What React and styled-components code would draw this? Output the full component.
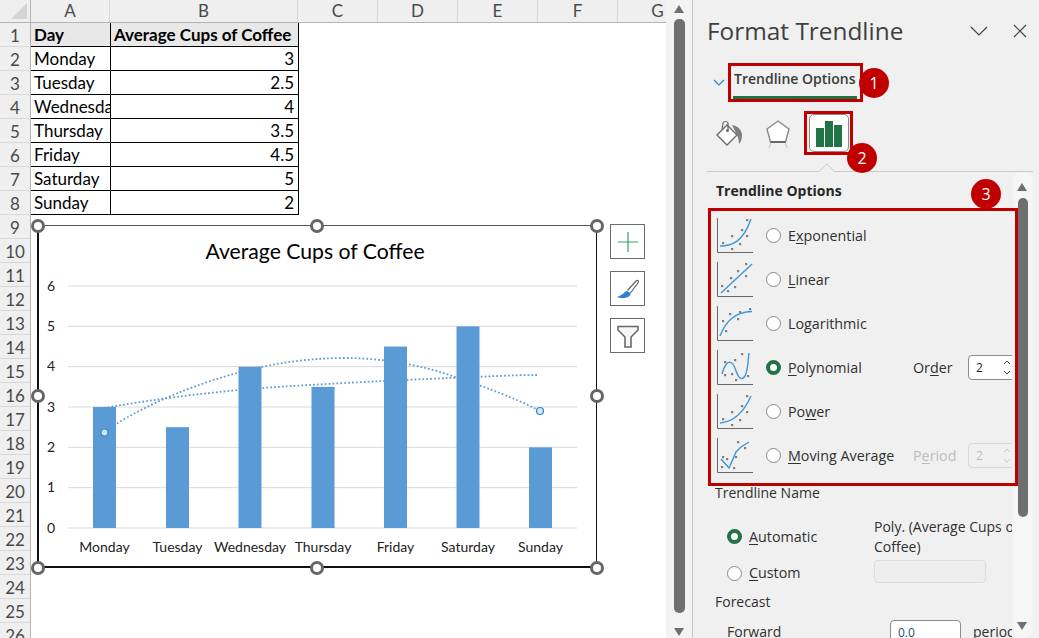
import React from 'react';
import styled, { createGlobalStyle } from 'styled-components';

const GlobalStyle = createGlobalStyle`
  html, body { margin: 0; padding: 0; background: #fff; overflow: hidden; }
  * { box-sizing: border-box; }
`;

const Page = styled.div`
  display: flex;
  width: 1039px;
  height: 638px;
  overflow: hidden;
  font-family: 'Lato', sans-serif;
`;

/* ---------- sheet ---------- */

const Sheet = styled.div`
  position: relative;
  width: 666px;
  height: 638px;
  overflow: hidden;
  background: #fff;
  flex-shrink: 0;
`;

const ColHeaders = styled.div`
  display: flex;
  height: 23px;
  background: #efefef;
  border-bottom: 1px solid #b4b4b4;
`;

const Corner = styled.div`
  position: relative;
  width: 31px;
  flex-shrink: 0;
  border-right: 1px solid #b4b4b4;

  &::after {
    content: '';
    position: absolute;
    right: 3px;
    bottom: 3px;
    border-style: solid;
    border-width: 0 0 16px 16px;
    border-color: transparent transparent #d4d4d4 transparent;
  }
`;

const ColHead = styled.div`
  width: ${(p) => p.$w}px;
  flex-shrink: 0;
  text-align: center;
  font-size: 17px;
  line-height: 22px;
  color: #4a4a4a;
  border-right: 1px solid #d8d8d8;
`;

const SheetBody = styled.div`
  display: flex;
`;

const RowHeaders = styled.div`
  width: 31px;
  flex-shrink: 0;
  background: #efefef;
  border-right: 1px solid #b4b4b4;
`;

const RowHead = styled.div`
  height: 24px;
  line-height: 25px;
  text-align: center;
  font-size: 17px;
  color: #4a4a4a;
  border-bottom: 1px solid #d8d8d8;
`;

const DataTable = styled.div`
  display: grid;
  grid-template-columns: 80px 188px;
  grid-auto-rows: 24px;
  align-self: flex-start;
`;

const Cell = styled.div`
  padding: 0 4px 0 3px;
  font-size: 17px;
  font-weight: ${(p) => (p.$head ? 700 : 400)};
  line-height: 24px;
  color: #000;
  white-space: nowrap;
  overflow: hidden;
  text-align: ${(p) => (p.$num ? 'right' : 'left')};
  background: ${(p) => (p.$head ? '#e8e8e8' : '#fff')};
  border-right: 1px solid #000;
  border-bottom: 1px solid #000;
`;

const SheetScroll = styled.div`
  position: relative;
  width: 27px;
  flex-shrink: 0;
  background: #f3f3f3;
  border-right: 1px solid #c8c8c8;
  padding: 19px 6px 25px 8px;
`;

const SheetThumb = styled.div`
  height: 594px;
  width: 11px;
  border-radius: 5px;
  background: #6f6f6f;
`;

const Arrow = styled.div`
  position: absolute;
  left: ${(p) => p.$x}px;
  ${(p) => (p.$down ? 'bottom' : 'top')}: ${(p) => p.$off}px;
  border-left: 5.5px solid transparent;
  border-right: 5.5px solid transparent;
  ${(p) => (p.$down ? 'border-top' : 'border-bottom')}: 8px solid #6f6f6f;
`;

/* ---------- chart ---------- */

const ChartFrame = styled.div`
  position: absolute;
  left: 37px;
  top: 225px;
  width: 560px;
  height: 343px;
  background: #fff;
  border: 2px solid #111;
  border-top: 1px solid #555;
  border-right-width: 1.5px;
`;

const ChartSvg = styled.svg`
  position: absolute;
  left: -2px;
  top: -1px;
  width: 560px;
  height: 343px;
`;

const Handle = styled.div`
  position: absolute;
  left: ${(p) => p.$x}px;
  top: ${(p) => p.$y}px;
  width: 14px;
  height: 14px;
  margin: -7px 0 0 -7px;
  border-radius: 50%;
  background: #fff;
  border: 3px solid #666;
`;

const ChartTools = styled.div`
  position: absolute;
  left: 610px;
  top: 224px;
  display: flex;
  flex-direction: column;
  gap: 12px;
`;

const ToolButton = styled.div`
  display: flex;
  align-items: center;
  justify-content: center;
  width: 35px;
  height: 35px;
  background: #fff;
  border: 1px solid #6b6b6b;
`;

/* ---------- format panel ---------- */

const Panel = styled.div`
  position: relative;
  width: 346px;
  height: 638px;
  overflow: hidden;
  flex-shrink: 0;
  background: #f0f0f0;
  font-family: 'Open Sans', sans-serif;
  color: #262626;
  font-size: 14px;
`;

const PanelHeader = styled.div`
  display: flex;
  align-items: center;
  height: 63px;
  padding: 0 12px 2px 14px;
`;

const PanelTitle = styled.div`
  flex: 1;
  font-size: 24.4px;
  line-height: 32px;
  color: #3f3f3f;
`;

const HeaderIcons = styled.div`
  display: flex;
  align-items: center;
  gap: 25px;
`;

const TabRow = styled.div`
  display: flex;
  align-items: center;
  height: 39px;
  padding-left: 20px;
  gap: 3px;
`;

const RedBox = styled.div`
  border: 3px solid #c00000;
`;

const TabBox = styled(RedBox)`
  position: relative;
  width: 135px;
  height: 39px;
  padding: 3px 3px 0 3px;
  font-size: 14px;
  font-weight: 600;
  line-height: 20px;
  color: #3a3a3a;
  white-space: nowrap;

  &::after {
    content: '';
    position: absolute;
    left: 2px;
    right: 3px;
    bottom: 0;
    height: 3px;
    background: #217346;
  }
`;

const IconTabs = styled.div`
  display: flex;
  align-items: flex-start;
  height: 44px;
  margin-top: 9px;
  padding-left: 22px;
`;

const IconTab = styled.div`
  width: ${(p) => p.$w}px;
  padding-top: ${(p) => p.$top}px;
  flex-shrink: 0;
`;

const ActiveTabBox = styled(RedBox)`
  width: 49px;
  height: 44px;
  padding: 0 1px 0 2px;
`;

const ActiveTab = styled.div`
  display: flex;
  align-items: flex-end;
  justify-content: center;
  gap: 1px;
  height: 38px;
  padding-bottom: 4px;
  background: #fff;
  border: 1px solid #8a8a8a;
  border-radius: 5px;
`;

const GreenBar = styled.div`
  width: 8px;
  height: ${(p) => p.$h}px;
  background: #217346;
`;

const Divider = styled.div`
  position: relative;
  height: 1px;
  width: 326px;
  margin: 16px 0 0 14px;
  background: #c9c9c9;

  &::after {
    content: '';
    position: absolute;
    left: 113px;
    top: -6px;
    width: 13px;
    height: 13px;
    background: #f0f0f0;
    border-top: 1px solid #c9c9c9;
    border-left: 1px solid #c9c9c9;
    transform: rotate(45deg) scale(0.9);
    clip-path: polygon(0 0, 100% 0, 0 100%);
  }
`;

const PanelBody = styled.div`
  display: flex;
  height: 466px;
`;

const Content = styled.div`
  width: 320px;
  flex-shrink: 0;
  padding-left: 15px;
`;

const SectionTitle = styled.div`
  height: 36px;
  padding: 9px 0 0 8px;
  font-weight: 700;
  font-size: 14px;
  line-height: 20px;
  color: #262626;
`;

const OptionsBox = styled(RedBox)`
  position: relative;
  z-index: 1;
  width: 310px;
  height: 278px;
`;

const OptionRows = styled.div`
  width: 301px;
  height: 272px;
  padding: 7px 0 0 6px;
  overflow: hidden;
`;

const OptionRow = styled.div`
  display: grid;
  grid-template-columns: 49px 22px 125px 55px 50px;
  align-items: center;
  height: 44px;
  padding-bottom: 9px;
`;

const TrendIcon = styled.svg`
  width: 36px;
  height: 35px;
  display: block;
`;

const Radio = styled.span`
  display: block;
  width: 15px;
  height: 15px;
  border-radius: 50%;
  background: #fff;
  border: ${(p) => (p.$on ? '4px solid #217346' : '1px solid #8a8a8a')};
`;

const OptionLabel = styled.span`
  font-size: 14.3px;
  line-height: 20px;
  white-space: nowrap;
  color: ${(p) => (p.$off ? '#bdbdbd' : '#303030')};

  u {
    text-underline-offset: 2px;
    text-decoration-thickness: 1px;
  }
`;

const Spinner = styled.div`
  display: flex;
  align-items: center;
  justify-content: space-between;
  width: 50px;
  height: 25px;
  padding: 0 6px 0 7px;
  background: ${(p) => (p.$off ? 'transparent' : '#fff')};
  border: 1px solid ${(p) => (p.$off ? '#d6d6d6' : '#8d8d8d')};
  border-radius: 4px;
  font-size: 12px;
  color: ${(p) => (p.$off ? '#bdbdbd' : '#262626')};
`;

const SpinArrows = styled.svg`
  width: 8px;
  height: 19px;
  display: block;
`;

const PlainLabel = styled.div`
  font-size: 14px;
  line-height: 20px;
  padding-left: ${(p) => p.$pad || 0}px;
  margin-top: ${(p) => p.$top || 0}px;
  color: #303030;
`;

const NameGrid = styled.div`
  display: grid;
  grid-template-columns: 166px 138px;
  grid-template-rows: 40px 29px;
  align-items: center;
  width: 304px;
  margin: 14px 0 0 0;
  overflow: hidden;
`;

const RadioOption = styled.div`
  display: flex;
  align-items: center;
  gap: 7px;
  padding-left: 19px;
  margin-top: ${(p) => p.$shift}px;
`;

const PolyName = styled.div`
  width: 170px;
  font-size: 14px;
  line-height: 20px;
  color: #303030;
`;

const NameInput = styled.div`
  width: 112px;
  height: 23px;
  background: #ededed;
  border: 1px solid #dcdcdc;
  border-radius: 4px;
`;

const ForwardRow = styled.div`
  display: flex;
  align-items: flex-start;
  width: 304px;
  margin-top: 8px;
  padding-left: 19px;
  overflow: hidden;
`;

const ForwardLabel = styled.div`
  width: 163px;
  flex-shrink: 0;
  padding-top: 2px;
  line-height: 20px;
  color: #303030;
`;

const ForwardInput = styled.div`
  width: 71px;
  height: 26px;
  flex-shrink: 0;
  padding: 3px 7px;
  background: #fff;
  border: 1px solid #8d8d8d;
  border-radius: 4px;
  font-size: 12px;
  line-height: 18px;
  color: #1f4e79;
`;

const ForwardUnit = styled.div`
  margin-left: 12px;
  padding-top: 2px;
  line-height: 20px;
  white-space: nowrap;
  color: #303030;
`;

const PanelScroll = styled.div`
  position: relative;
  width: 20px;
  height: 466px;
  flex-shrink: 0;
  background: #f6f6f6;
  border-radius: 8px;
  padding: 26px 0 0 5px;
`;

const PanelThumb = styled.div`
  width: 10px;
  height: 319px;
  border-radius: 5px;
  background: #6f6f6f;
`;

const Badge = styled.div`
  position: absolute;
  z-index: 2;
  left: ${(p) => p.$x}px;
  top: ${(p) => p.$y}px;
  width: 30px;
  height: 30px;
  margin: -15px 0 0 -15px;
  border-radius: 50%;
  background: #c00000;
  color: #fff;
  font-size: 16px;
  line-height: 30px;
  text-align: center;
`;

const days = [
  ['Monday', 3],
  ['Tuesday', 2.5],
  ['Wednesday', 4],
  ['Thursday', 3.5],
  ['Friday', 4.5],
  ['Saturday', 5],
  ['Sunday', 2],
];

const colWidths = [
  ['A', 79],
  ['B', 188],
  ['C', 80],
  ['D', 80],
  ['E', 80],
  ['F', 80],
  ['G', 80],
];

const rows = Array.from({ length: 26 }, (_, i) => i + 1);

const barCenters = [104.5, 177.5, 250, 323, 395.5, 468, 540.5];
const yFor = (v) => 528 - v * 40.33;

function Chart() {
  return (
    <ChartFrame>
      <ChartSvg viewBox="37 225 560 343">
        <text x="315" y="259" textAnchor="middle" fontSize="21.2" fill="#000" fontFamily="Lato, sans-serif">
          Average Cups of Coffee
        </text>
        {[0, 1, 2, 3, 4, 5, 6].map((v) => (
          <g key={v}>
            <line x1="68" x2="577" y1={yFor(v)} y2={yFor(v)} stroke="#d9d9d9" strokeWidth="1" />
            <text x="51" y={yFor(v) + 4.5} textAnchor="middle" fontSize="14" fill="#222" fontFamily="Lato, sans-serif">
              {v}
            </text>
          </g>
        ))}
        {days.map(([name, val], i) => (
          <g key={name}>
            <rect x={barCenters[i] - 11.5} y={yFor(val)} width="23" height={val * 40.33} fill="#5b9bd5" />
            <text x={barCenters[i]} y="552" textAnchor="middle" fontSize="14" fill="#222" fontFamily="Lato, sans-serif">
              {name}
            </text>
          </g>
        ))}
        <path
          d="M104 432 C130 414 175 390 237 373 C262 366 300 358 345 358 C385 358 425 366 455 377 C485 387 515 398 540 411"
          fill="none"
          stroke="#5b9bd5"
          strokeWidth="1.8"
          strokeDasharray="1.7 2.2"
        />
        <path
          d="M104 408 C150 400 200 393 262 388 C320 384 400 380 450 378 C480 377 510 375 537 375"
          fill="none"
          stroke="#5b9bd5"
          strokeWidth="1.8"
          strokeDasharray="1.7 2.2"
        />
        <circle cx="104.5" cy="432.5" r="3.5" fill="#d3e6f5" stroke="#2e86cf" strokeWidth="1.2" />
        <circle cx="540" cy="411" r="3.5" fill="#d3e6f5" stroke="#2e86cf" strokeWidth="1.2" />
      </ChartSvg>
    </ChartFrame>
  );
}

const handles = [
  [38, 226],
  [317, 226],
  [597, 226],
  [38, 396],
  [597, 396],
  [38, 568],
  [317, 568],
  [597, 568],
];

function GraphIcon({ children }) {
  return (
    <TrendIcon viewBox="0 0 36 35">
      <path d="M0.5 0V34.5H36" fill="none" stroke="#6a6a6a" strokeWidth="1" />
      {children}
    </TrendIcon>
  );
}

const Dots = ({ pts }) => (
  <>
    {pts.map(([x, y]) => (
      <rect key={`${x}-${y}`} x={x - 1} y={y - 1} width="2.2" height="2.2" fill="#7f7f7f" />
    ))}
  </>
);

const Curve = ({ d }) => <path d={d} fill="none" stroke="#3c96dc" strokeWidth="1.4" />;

const trendOptions = [
  {
    key: 'exp',
    label: <>E<u>x</u>ponential</>,
    dots: [[6, 25], [15, 18], [15, 31], [23, 26], [25, 12], [30, 18], [30, 2]],
    curve: 'M3 28 C15 28 26 24 34 1',
  },
  {
    key: 'lin',
    label: <><u>L</u>inear</>,
    dots: [[5, 24], [11, 29], [14, 16], [18, 25], [21, 9], [29, 14], [29, 2]],
    curve: 'M4 31 L35 2',
  },
  {
    key: 'log',
    label: <>Lo<u>g</u>arithmic</>,
    dots: [[9, 25], [6, 15], [13, 8], [21, 13], [23, 6], [33, 3]],
    curve: 'M3 30 C9 15 18 6 35 5.5',
  },
  {
    key: 'poly',
    label: <><u>P</u>olynomial</>,
    dots: [[8, 25], [8, 12], [18, 10], [15, 24], [19, 30], [25, 4], [31, 26]],
    curve: 'M5 24 C9 10 14 9 18 18 C21 27 24 32 28 26 C31 21 31 10 32 3',
    on: true,
    extra: 'order',
  },
  {
    key: 'pow',
    label: <>Po<u>w</u>er</>,
    dots: [[6, 25], [15, 18], [15, 31], [23, 26], [25, 12], [30, 18], [30, 2]],
    curve: 'M3 29 C15 28 26 20 34 2',
  },
  {
    key: 'avg',
    label: <><u>M</u>oving Average</>,
    dots: [[5, 29], [6, 19], [10, 21], [17, 30], [19, 19], [21, 4], [28, 10]],
    curve: 'M4 21 L12 30 L19 14 L24 9 L32 4',
    extra: 'period',
  },
];

function SpinBox({ off }) {
  const c = off ? '#c8c8c8' : '#444';
  return (
    <Spinner $off={off}>
      2
      <SpinArrows viewBox="0 0 8 19">
        <path d="M1 6 L4 3 L7 6" fill="none" stroke={c} strokeWidth="1" />
        <path d="M1 13 L4 16 L7 13" fill="none" stroke={c} strokeWidth="1" />
      </SpinArrows>
    </Spinner>
  );
}

export default function App() {
  return (
    <Page>
      <GlobalStyle />
      <Sheet>
        <ColHeaders>
          <Corner />
          {colWidths.map(([name, w]) => (
            <ColHead key={name} $w={w}>{name}</ColHead>
          ))}
        </ColHeaders>
        <SheetBody>
          <RowHeaders>
            {rows.map((r) => (
              <RowHead key={r}>{r}</RowHead>
            ))}
          </RowHeaders>
          <DataTable>
            <Cell $head>Day</Cell>
            <Cell $head>Average Cups of Coffee</Cell>
            {days.map(([name, val]) => (
              <React.Fragment key={name}>
                <Cell>{name}</Cell>
                <Cell $num>{val}</Cell>
              </React.Fragment>
            ))}
          </DataTable>
        </SheetBody>
        <Chart />
        {handles.map(([x, y]) => (
          <Handle key={`${x}-${y}`} $x={x} $y={y} />
        ))}
        <ChartTools>
          <ToolButton>
            <svg width="24" height="24" viewBox="0 0 24 24">
              <path d="M12 2V22M2 12H22" stroke="#2fa36b" strokeWidth="1.2" fill="none" />
            </svg>
          </ToolButton>
          <ToolButton>
            <svg width="24" height="24" viewBox="0 0 24 24">
              <path d="M11.5 13.5 L20 4 C21 3 23 3.5 22.5 5 L14.5 16" fill="#fff" stroke="#666" strokeWidth="1.2" />
              <path d="M11 14 C8 15 7 18 1 20 C4 21.5 9 21.5 12 20 C14 19 15 17 14.5 16 Z" fill="#2e7fd0" />
            </svg>
          </ToolButton>
          <ToolButton>
            <svg width="24" height="24" viewBox="0 0 24 24">
              <path d="M2 2.5 H22 V6 L15 13 V23 H9 V13 L2 6 Z" fill="#f7f7f7" stroke="#6a6a6a" strokeWidth="1.6" />
            </svg>
          </ToolButton>
        </ChartTools>
      </Sheet>

      <SheetScroll>
        <Arrow $x={8} $off={5} />
        <SheetThumb />
        <Arrow $x={8} $off={2} $down />
      </SheetScroll>

      <Panel>
        <PanelHeader>
          <PanelTitle>Format Trendline</PanelTitle>
          <HeaderIcons>
            <svg width="18" height="10" viewBox="0 0 18 10">
              <path d="M1 1 L9 9 L17 1" fill="none" stroke="#444" strokeWidth="1.2" />
            </svg>
            <svg width="14" height="14" viewBox="0 0 14 14">
              <path d="M1 1 L13 13 M13 1 L1 13" fill="none" stroke="#444" strokeWidth="1.2" />
            </svg>
          </HeaderIcons>
        </PanelHeader>

        <TabRow>
          <svg width="12" height="7" viewBox="0 0 12 7">
            <path d="M1 1 L6 6 L11 1" fill="none" stroke="#2f87d0" strokeWidth="1.2" />
          </svg>
          <TabBox>Trendline Options</TabBox>
        </TabRow>

        <IconTabs>
          <IconTab $w={51} $top={9}>
            <svg width="28" height="26" viewBox="0 0 28 26">
              <path d="M2 15 L12 5 L22 15 L12 25 Z" fill="#fff" stroke="#6a6a6a" strokeWidth="1.4" />
              <path d="M7 10 L8 3 C9 1 12 1 13 3 L13 10" stroke="#6a6a6a" strokeWidth="1.2" fill="none" />
              <circle cx="12.5" cy="10.5" r="1.5" fill="#6a6a6a" />
              <path d="M17 5 C23 6 27 10 27 15 C27 19 26 22 24 24 C24 20 23 17 22 15 Z" fill="#7f7f7f" />
            </svg>
          </IconTab>
          <IconTab $w={38} $top={9}>
            <svg width="24" height="28" viewBox="0 0 24 28">
              <path d="M12 1 L23 9 L19.5 22 H4.5 L1 9 Z" fill="#fff" stroke="#8a8a8a" strokeWidth="1.4" />
              <path d="M4.5 22 H19.5" stroke="#666" strokeWidth="2" fill="none" />
              <path d="M3 28 L5 23 M21 28 L19 23" stroke="#cfcfcf" strokeWidth="1.4" fill="none" />
            </svg>
          </IconTab>
          <ActiveTabBox>
            <ActiveTab>
              <GreenBar $h={19} />
              <GreenBar $h={26} />
              <GreenBar $h={22} />
            </ActiveTab>
          </ActiveTabBox>
        </IconTabs>

        <Divider />

        <PanelBody>
          <Content>
            <SectionTitle>Trendline Options</SectionTitle>
            <OptionsBox>
              <OptionRows>
                {trendOptions.map((o) => (
                  <OptionRow key={o.key}>
                    <GraphIcon>
                      <Dots pts={o.dots} />
                      <Curve d={o.curve} />
                    </GraphIcon>
                    <Radio $on={o.on} />
                    <OptionLabel>{o.label}</OptionLabel>
                    {o.extra === 'order' && <OptionLabel>Or<u>d</u>er</OptionLabel>}
                    {o.extra === 'order' && <SpinBox />}
                    {o.extra === 'period' && <OptionLabel $off>P<u>e</u>riod</OptionLabel>}
                    {o.extra === 'period' && <SpinBox off />}
                  </OptionRow>
                ))}
              </OptionRows>
            </OptionsBox>
            <PlainLabel $pad={7} $top={-3}>Trendline Name</PlainLabel>
            <NameGrid>
              <RadioOption $shift={-1}>
                <Radio $on />
                <OptionLabel><u>A</u>utomatic</OptionLabel>
              </RadioOption>
              <PolyName>Poly. (Average Cups of Coffee)</PolyName>
              <RadioOption $shift={3}>
                <Radio />
                <OptionLabel><u>C</u>ustom</OptionLabel>
              </RadioOption>
              <NameInput />
            </NameGrid>
            <PlainLabel $pad={7} $top={6}>Forecast</PlainLabel>
            <ForwardRow>
              <ForwardLabel>Forward</ForwardLabel>
              <ForwardInput>0.0</ForwardInput>
              <ForwardUnit>periods</ForwardUnit>
            </ForwardRow>
          </Content>
          <PanelScroll>
            <Arrow $x={4} $off={11} />
            <PanelThumb />
            <Arrow $x={4} $off={8} $down />
          </PanelScroll>
        </PanelBody>

        <Badge $x={181} $y={83}>1</Badge>
        <Badge $x={169} $y={158}>2</Badge>
        <Badge $x={293} $y={194}>3</Badge>
      </Panel>
    </Page>
  );
}
